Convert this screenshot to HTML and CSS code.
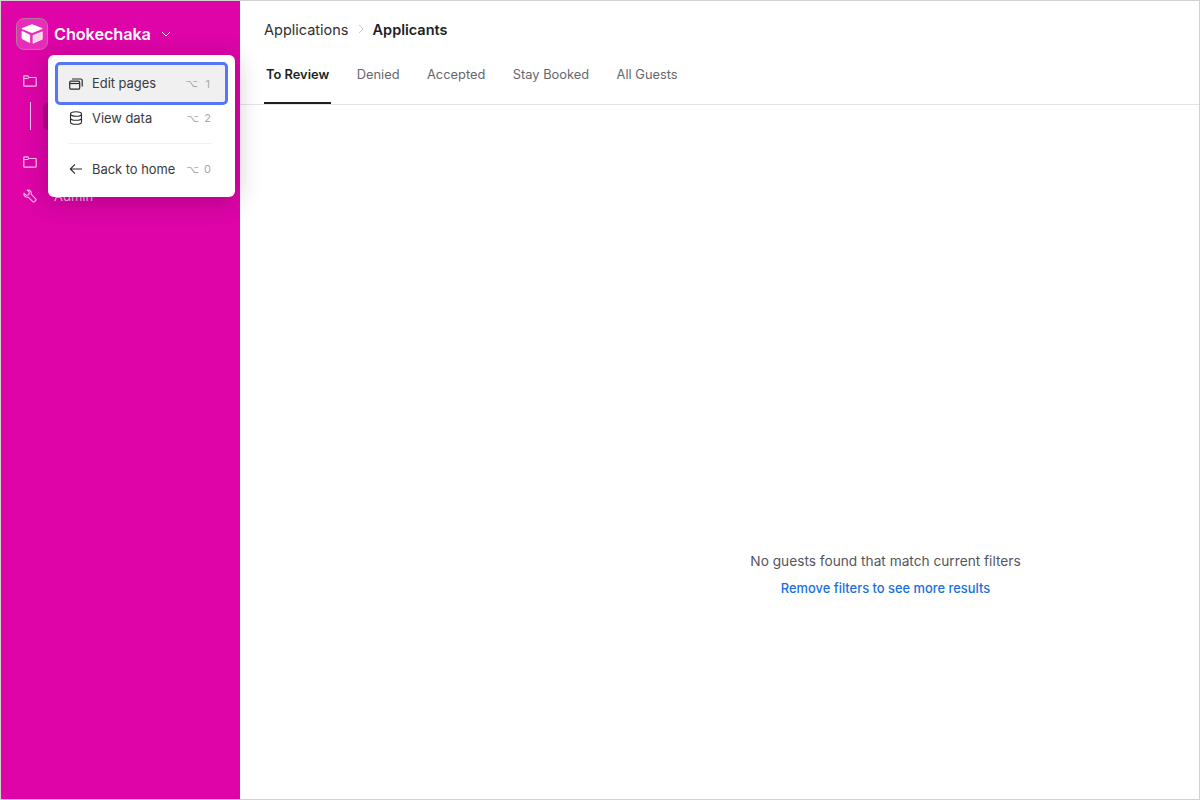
FILE: index.html
```html
<!DOCTYPE html>
<html lang="en">

<head>
    <meta charset="utf-8">
    <title>Chokechaka</title>
    <link rel="stylesheet" href="styles.css">
</head>

<body>
    <div class="app">

        <!-- sidebar -->
        <aside class="sidebar">
            <div class="brand">
                <div class="brand-logo">
                    <svg width="24" height="20" viewBox="0 0 24 20">
                        <path d="M12 .6 22.300 4.600 12 8.700 1.900 4.600z" fill="#fff" stroke="#fff" stroke-width="0.800" stroke-linejoin="round" />
                        <path d="M2 7.300 9.700 11v7.600L2 14.600z" fill="#fff" stroke="#fff" stroke-width="0.800" stroke-linejoin="round" />
                        <path d="M13 11.500 22.300 7.800v7.500L13 19.200z" fill="#fff" fill-opacity="0.8" stroke="#fff" stroke-opacity="0.8" stroke-width="0.800" stroke-linejoin="round" />
                    </svg>
                </div>
                <span class="brand-name">Chokechaka</span>
                <svg class="brand-caret" width="10" height="6" viewBox="0 0 10 6">
                    <path d="M1 1l4 4 4-4" fill="none" stroke="#fff" stroke-width="1" />
                </svg>
            </div>

            <nav class="side-nav">
                <div class="side-item">
                    <svg class="side-icon" width="14" height="12" viewBox="0 0 14 12">
                        <path d="M.8 1.500c0-.4.300-.7.700-.7h3.300l1 1.700h6.700c.4 0 .7.300.7.700v7.300c0 .4-.3.700-.7.700H1.500c-.4 0-.7-.3-.7-.7z" fill="none" stroke="#fbc4ea" stroke-width="1.200" />
                        <path d="M1 3.500h4.500" stroke="#fbc4ea" stroke-width="1" />
                    </svg>
                </div>
                <div class="side-sub">
                    <div class="side-line"></div>
                    <div class="side-active"></div>
                </div>
                <div class="side-item">
                    <svg class="side-icon" width="14" height="12" viewBox="0 0 14 12">
                        <path d="M.8 1.500c0-.4.300-.7.700-.7h3.300l1 1.700h6.700c.4 0 .7.300.7.700v7.300c0 .4-.3.700-.7.700H1.500c-.4 0-.7-.3-.7-.7z" fill="none" stroke="#fbc4ea" stroke-width="1.200" />
                        <path d="M1 3.500h4.500" stroke="#fbc4ea" stroke-width="1" />
                    </svg>
                </div>
                <div class="side-item">
                    <svg class="side-icon" width="14" height="14" viewBox="0 0 14 14">
                        <path d="M4.200 1.100a3.200 3.200 0 0 1 3.900 4.100l4.600 4.600a1.200 1.200 0 0 1 0 1.700l-1.200 1.200a1.200 1.200 0 0 1-1.700 0L5.200 8.100a3.200 3.200 0 0 1-4.100-3.900L3.200 6.300l2.600-.5.500-2.600z" fill="none" stroke="#fbc4ea" stroke-width="1.100" stroke-linejoin="round" />
                    </svg>
                    <span>Admin</span>
                </div>
            </nav>

            <!-- popup menu -->
            <div class="menu">
                <div class="menu-row menu-row-selected">
                    <svg width="14" height="12" viewBox="0 0 14 12">
                        <rect x="0.700" y="3.200" width="10" height="8" rx="1.300" fill="none" stroke="#2b2b2f" stroke-width="1.200" />
                        <path d="M.9 5.500h9.600" stroke="#2b2b2f" stroke-width="1.200" />
                        <path d="M3 1h8.800c.8 0 1.400.6 1.400 1.400v6" fill="none" stroke="#2b2b2f" stroke-width="1.200" />
                    </svg>
                    <span class="menu-label">Edit pages</span>
                    <span class="menu-key">⌥</span>
                    <span class="menu-num">1</span>
                </div>
                <div class="menu-row">
                    <svg width="14" height="14" viewBox="0 0 14 14">
                        <ellipse cx="7" cy="3" rx="5.500" ry="2.300" fill="none" stroke="#2b2b2f" stroke-width="1.100" />
                        <path d="M1.500 3v8c0 1.300 2.500 2.300 5.500 2.300s5.500-1 5.500-2.300V3M1.500 7c0 1.300 2.500 2.300 5.500 2.300s5.500-1 5.500-2.300" fill="none" stroke="#2b2b2f" stroke-width="1.100" />
                    </svg>
                    <span class="menu-label">View data</span>
                    <span class="menu-key">⌥</span>
                    <span class="menu-num">2</span>
                </div>
                <div class="menu-sep"></div>
                <div class="menu-row">
                    <svg width="14" height="12" viewBox="0 0 14 12">
                        <path d="M13 6H1.500M6 1.300 1.300 6 6 10.700" fill="none" stroke="#2b2b2f" stroke-width="1.100" />
                    </svg>
                    <span class="menu-label">Back to home</span>
                    <span class="menu-key">⌥</span>
                    <span class="menu-num">0</span>
                </div>
            </div>
        </aside>

        <!-- main -->
        <main class="content">
            <header class="top">
                <div class="crumbs">
                    <span>Applications</span>
                    <svg width="6" height="10" viewBox="0 0 6 10">
                        <path d="M1 1l4 4-4 4" fill="none" stroke="#c9c9cc" stroke-width="1" />
                    </svg>
                    <strong>Applicants</strong>
                </div>
                <div class="tabs">
                    <div class="tab tab-active">To Review</div>
                    <div class="tab">Denied</div>
                    <div class="tab">Accepted</div>
                    <div class="tab">Stay Booked</div>
                    <div class="tab">All Guests</div>
                </div>
            </header>

            <section class="empty">
                <p class="empty-text">No guests found that match current filters</p>
                <a class="empty-link">Remove filters to see more results</a>
            </section>
        </main>

    </div>
</body>

</html>
```

FILE: styles.css
```css
html,
body {
    margin: 0;
    height: 100%;
}

body {
    font-family: Inter, 'Liberation Sans', sans-serif;
    background-color: white;
}

.app {
    display: flex;
    height: 800px;
    box-sizing: border-box;
    border: 1px solid #d2d2d2;
}

.sidebar {
    position: relative;
    width: 239px;
    flex-shrink: 0;
    background-color: #de04a8;
    color: #fbc4ea;
}

.brand {
    display: flex;
    align-items: center;
    padding: 17px 0 0 15px;
}

.brand-logo {
    display: flex;
    align-items: center;
    justify-content: center;
    width: 30px;
    height: 30px;
    background-color: #e92cb9;
    border: 1px solid #b07a9c;
    border-radius: 8px;
}

.brand-name {
    margin-left: 6px;
    font-size: 16.300px;
    font-weight: 600;
    letter-spacing: -0.1px;
    color: white;
}

.brand-caret {
    margin-left: 10px;
}

.side-nav {
    padding-top: 14px;
}

.side-item {
    display: flex;
    align-items: center;
    height: 34px;
    padding-left: 22px;
    font-size: 13px;
}

.side-icon {
    margin-right: 17px;
    flex-shrink: 0;
}

.side-sub {
    display: flex;
    align-items: center;
    height: 28px;
    margin: 4px 0 15px;
    padding-left: 29px;
}

.side-line {
    width: 1px;
    height: 28px;
    background-color: #fbc4ea;
}

.side-active {
    width: 150px;
    margin-left: 12px;
    height: 27px;
    background-color: #b8028c;
    border-radius: 5px;
}

.menu {
    position: absolute;
    left: 47px;
    top: 54px;
    width: 187px;
    height: 142px;
    box-sizing: border-box;
    padding: 7px 8px;
    background-color: white;
    border-radius: 6px;
    box-shadow: 0 4px 24px rgba(60, 0, 50, 0.3);
    color: #3a3a3e;
}

.menu-row {
    display: flex;
    align-items: center;
    height: 32px;
    padding: 0 16px 0 13px;
    font-size: 12.900px;
}

.menu-row svg {
    width: 14px;
    flex-shrink: 0;
}

.menu-row-selected {
    height: 37px;
    margin: 3px 0 0 2px;
    padding: 0 15px 0 11px;
    width: 167px;
    box-sizing: border-box;
    background-color: #f0f0f0;
    border-radius: 2px;
    outline: 3px solid #5577f7;
}

.menu-label {
    margin-left: 9px;
    flex-grow: 1;
    white-space: nowrap;
}

.menu-key {
    font-size: 11px;
    color: #a8a8a8;
    font-family: 'DejaVu Sans', sans-serif;
}

.menu-num {
    width: 12px;
    text-align: right;
    font-size: 11px;
    color: #a8a8a8;
}

.menu-sep {
    height: 1px;
    margin: 9px 15px 9px 12px;
    background-color: #f0f0f0;
}

.content {
    flex-grow: 1;
    display: flex;
    flex-direction: column;
    min-width: 0;
}

.top {
    border-bottom: 1px solid #e4e4e6;
    padding-left: 24px;
    height: 104px;
    box-sizing: border-box;
}

.crumbs {
    display: flex;
    align-items: center;
    gap: 9px;
    height: 18px;
    margin-top: 19px;
    font-size: 14.500px;
    color: #2f2f33;
}

.crumbs strong {
    font-weight: 600;
    color: #1d1f25;
}

.tabs {
    display: flex;
    margin-top: 15px;
}

.tab {
    height: 51px;
    box-sizing: border-box;
    padding: 14px 2px 0;
    margin-right: 23.500px;
    font-size: 12.850px;
    color: #65676d;
}

.tab-active {
    font-weight: 600;
    color: #1d1f25;
    border-bottom: 2px solid #1d1f25;
}

.empty {
    flex-grow: 1;
    display: flex;
    flex-direction: column;
    align-items: center;
    justify-content: center;
    padding: 244px 0 0 332px;
}

.empty-text {
    margin: 0;
    font-size: 13.700px;
    color: #55565b;
}

.empty-link {
    margin-top: 12px;
    font-size: 12.900px;
    font-weight: 500;
    color: #1a6fe0;
}
```
